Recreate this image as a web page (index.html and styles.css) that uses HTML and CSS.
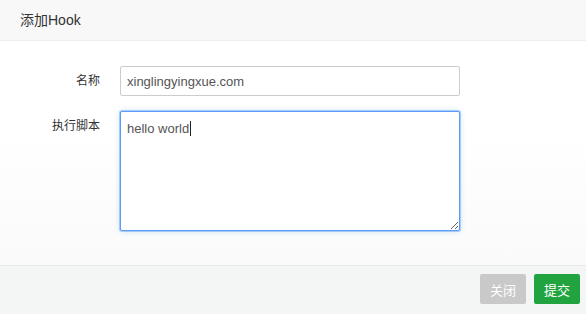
FILE: index.html
```html
<!DOCTYPE html>
<html lang="zh">
<head>
    <meta charset="UTF-8">
    <meta name="viewport" content="width=device-width, initial-scale=1.0">
    <title>添加Hook</title>
    <link rel="stylesheet" href="styles.css">
</head>
<body>
    <div class="modal">
        <div class="modal-header">添加Hook</div>

        <div class="modal-body">
            <div class="form-row">
                <label class="form-label">名称</label>
                <input class="form-input" type="text" value="xinglingyingxue.com">
            </div>
            <div class="form-row">
                <label class="form-label">执行脚本</label>
                <div class="textarea-wrap">
                    <textarea class="form-textarea">hello world</textarea>
                    <span class="caret"></span>
                </div>
            </div>
        </div>

        <div class="modal-footer">
            <button class="btn btn-close">关闭</button>
            <button class="btn btn-submit">提交</button>
        </div>
    </div>
</body>
</html>
```

FILE: styles.css
```css
* {
    box-sizing: border-box;
}
body {
    margin: 0;
    font-family: 'Liberation Sans', 'Noto Sans CJK SC', sans-serif;
    color: #333;
    background: #fff;
}
.modal {
    width: 586px;
    height: 314px;
    display: flex;
    flex-direction: column;
}
.modal-header {
    height: 41px;
    line-height: 40px;
    padding: 0 20px;
    font-size: 14px;
    color: #333;
    background: #f8f8f8;
    border-bottom: 1px solid #eee;
}
.modal-body {
    flex: 1;
    padding-top: 25px;
    display: flex;
    flex-direction: column;
    gap: 15px;
    background: linear-gradient(to bottom, #fff 0%, #fff 40%, #fafafa 100%);
}
.form-row {
    display: flex;
    align-items: flex-start;
}
.form-label {
    width: 100px;
    margin-right: 20px;
    text-align: right;
    font-size: 12px;
    line-height: 30px;
    color: #333;
}
.form-input {
    width: 340px;
    height: 30px;
    padding: 0 6px;
    font-family: inherit;
    font-size: 13px;
    color: #555;
    border: 1px solid #ccc;
    border-radius: 2px;
    outline: none;
    margin: 0;
}
.textarea-wrap {
    position: relative;
}
.form-textarea {
    display: block;
    width: 340px;
    height: 120px;
    padding: 8px 6px;
    margin: 0;
    font-family: inherit;
    font-size: 13px;
    line-height: 17px;
    color: #555;
    border: 1px solid #5a9cf6;
    border-radius: 2px;
    outline: none;
    box-shadow: 0 0 0 1px rgba(90, 156, 246, 0.45), 0 0 6px rgba(102, 175, 233, 0.35);
    background: #fff;
}
.caret {
    position: absolute;
    left: 70px;
    top: 10px;
    width: 1px;
    height: 15px;
    background: #222;
}
.modal-footer {
    height: 49px;
    padding: 8px 6px 0 0;
    display: flex;
    justify-content: flex-end;
    gap: 8px;
    background: #f4f5f5;
    border-top: 1px solid #e8e8e8;
}
.btn {
    height: 30px;
    padding: 0 10px;
    font-family: inherit;
    font-size: 13px;
    color: #fff;
    border: none;
    border-radius: 2px;
    cursor: pointer;
}
.btn-close {
    background: #c9c9c9;
}
.btn-submit {
    background: #21a440;
}
```
